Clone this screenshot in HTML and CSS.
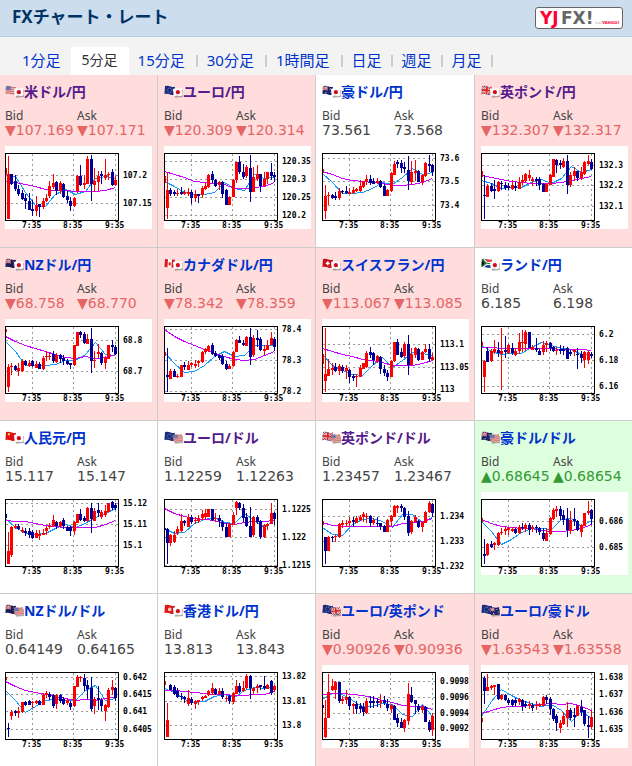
FILE: index.html
```html
<!DOCTYPE html>
<html lang="ja">
<head>
<meta charset="utf-8">
<title>FXチャート・レート</title>
<link rel="stylesheet" href="styles.css">
</head>
<body>
<header class="header">
  <h1 class="header-title">FXチャート・レート</h1>
  <a class="sponsor" href="#" aria-label="YJFX! from YAHOO!">
    <svg width="86" height="20" viewBox="0 0 86 20">
      <text class="logo-yj" x="4" y="16">YJ</text>
      <text class="logo-fx" x="25" y="16">FX!</text>
      <text class="logo-from" x="59" y="16">from</text>
      <text class="logo-yahoo" x="66" y="16">YAHOO!</text>
    </svg>
  </a>
</header>
<nav class="tabs">
  <a class="tab tab-first" href="#">1分足</a>
  <span class="tab-active" aria-current="page">5分足</span>
  <a class="tab" href="#">15分足</a><i class="sep"></i>
  <a class="tab" href="#">30分足</a><i class="sep"></i>
  <a class="tab" href="#">1時間足</a><i class="sep"></i>
  <a class="tab tab-long-term" href="#">日足</a><i class="sep"></i>
  <a class="tab tab-long-term" href="#">週足</a><i class="sep"></i>
  <a class="tab tab-long-term" href="#">月足</a><i class="sep"></i>
</nav>
<main class="rates" id="rates"></main>
<script src="rates.js"></script>
</body>
</html>
```
FILE: styles.css
```css
* {
  box-sizing: border-box;
}

body {
  margin: 0;
  background: #fff;
  color: #444;
  font-family: "Noto Sans", "Noto Sans CJK JP", sans-serif;
}

.header {
  display: flex;
  align-items: center;
  justify-content: space-between;
  height: 37px;
  padding: 0 9px 0 12px;
  background: #ccdded;
  border-bottom: 1px solid #b5c9dc;
}

.header-title {
  margin: 0;
  padding-bottom: 3px;
  color: #036;
  font-size: 17px;
  line-height: 24px;
}

.sponsor {
  display: block;
  height: 22px;
  background: #fff;
  border: 1px solid #666;
  border-radius: 3px;
}

.sponsor svg {
  display: block;
}

.sponsor text {
  font-family: "DejaVu Sans", sans-serif;
  font-weight: bold;
}

.logo-yj {
  fill: #f03;
  font-size: 17px;
}

.logo-fx {
  fill: #666;
  font-size: 17px;
}

.sponsor .logo-from {
  fill: #999;
  font-size: 3px;
  font-weight: normal;
}

.logo-yahoo {
  fill: #f03;
  font-size: 4px;
}

.tabs {
  display: flex;
  height: 38px;
  padding: 10px 0 0 12px;
  background: #f3f3f3;
  font-size: 15px;
  line-height: 26px;
  white-space: nowrap;
}

.tab {
  padding: 0 11px 0 9px;
  color: #03c;
  text-decoration: none;
}

.tab-first {
  padding: 0 10px;
}

.tab-long-term {
  padding: 0 9px;
}

.tab-active {
  padding: 0 11px;
  background: #fff;
  color: #333;
  font-size: 14px;
}

.sep {
  width: 2px;
  height: 12px;
  margin-top: 8px;
  background: #ccc;
}

.rates {
  display: grid;
  grid-template-columns: 157fr 158fr 159fr 158fr;
}

.rate {
  padding: 4px 0 18px 6px;
  border-left: 1px solid #ccc;
  border-bottom: 1px solid #ccc;
}

.rate:nth-child(4n + 1) {
  padding-left: 5px;
  border-left: 0;
}

.rate:nth-last-child(-n + 4) {
  border-bottom: 0;
}

.down {
  background: #fdd;
}

.up {
  background: #dfd;
}

.pair {
  display: flex;
  align-items: center;
  height: 26px;
  margin: 0 0 4px;
  font-size: 14px;
  line-height: 24px;
  white-space: nowrap;
}

.pair a {
  color: #03c;
  text-decoration: none;
}

.pair a.seen {
  color: #551a8b;
}

.flags {
  flex: none;
}

.quotes {
  display: grid;
  grid-template-columns: 72px 72px;
  align-content: start;
  height: 37px;
  margin: 0;
}

.quotes dt {
  font-size: 12px;
  line-height: 14px;
}

.quotes dd {
  margin: 0;
  font-family: "DejaVu Sans", sans-serif;
  font-size: 14px;
  line-height: 14px;
  white-space: nowrap;
}

.down dd {
  color: #e66464;
}

.up dd {
  color: #393;
}

.chart {
  display: block;
  background: #fff;
  shape-rendering: crispEdges;
}

.chart text {
  fill: #000;
  font-family: "DejaVu Sans Mono", monospace;
  font-size: 8px;
  font-weight: bold;
}

.grid {
  stroke: #999;
  stroke-dasharray: 2 3;
}

.frame {
  fill: none;
  stroke: #000;
}

.ma-short,
.ma-long {
  fill: none;
  stroke: #19f;
}

.ma-long {
  stroke: #c0f;
}

.r {
  fill: #f00;
}

.b {
  fill: #009;
}
```
FILE: rates.js
```js
// Chart heights are stored in thirds of a pixel, measured down from the sheet's top.
// Candle: colour, high, body top, body bottom, low. The averages have a point every 10px.
const pairs = [
  { name: "米ドル/円", flags: "us jp", seen: 1, state: "down", bid: "107.169", ask: "107.171",
    grid: { "107.2": 300, "107.15": 385 }, first: "r280 298",
    candles: "r243 298 432 432,b297 298 327 330,b300 318 342 347,b330 342 357 362,b345 354 372 375,b357 368 378 403,b355 378 404 405,b375 403 408 423,r363 391 408 423,b387 387 397 426,r368 378 397 402,r357 368 378 380,r318 333 362 368,r297 324 336 342,b318 321 348 360,r318 324 348 357,b324 327 365 370,b348 363 374 384,b365 378 393 407,r366 370 393 395,r300 302 348 355,b270 302 330 334,r300 324 330 342,r243 252 327 328,b240 252 327 378,r278 318 330 350,r288 303 322 348,b288 297 303 327,r252 300 308 315,r290 297 301 315,b282 291 330 333,r303 315 330 333",
    short: [297,303,350,390,392,358,343,358,348,308,303,310], long: [318,321,326,333,342,345,344,349,349,349,346,336] },
  { name: "ユーロ/円", flags: "eu jp", seen: 1, state: "down", bid: "120.309", ask: "120.314",
    grid: { "120.35": 257, "120.3": 313, "120.25": 367, "120.2": 421 }, first: "r303 325",
    candles: "r290 345 398 432,b338 346 358 362,b345 352 356 362,r342 353 357 362,b335 350 357 360,r345 351 357 360,r340 352 358 362,b345 352 370 387,r345 357 370 380,b357 357 362 383,r333 338 360 368,r325 333 342 345,r297 300 336 338,b287 298 315 325,b312 315 333 337,r318 321 330 345,b318 321 357 370,b342 345 390 390,r363 366 390 390,r312 315 366 367,r262 262 315 325,b243 262 290 298,b267 290 305 313,r270 276 303 308,b240 280 350 380,r275 306 350 350,r270 298 313 318,b297 297 333 352,r291 312 333 335,r291 291 313 328,b265 291 303 315,b291 300 306 320",
    short: [318,332,352,357,358,352,322,340,345,298,308,307], long: [288,298,307,317,322,325,328,338,338,335,334,321] },
  { name: "豪ドル/円", flags: "au jp", bid: "73.561", ask: "73.568",
    grid: { "73.6": 250, "73.5": 319, "73.4": 391 }, first: "r283 295",
    candles: "r330 363 407 432,r350 360 364 390,b357 360 370 372,b350 362 370 375,r340 348 370 375,b345 348 352 358,b332 348 354 357,r340 350 356 357,r335 345 353 357,r338 342 348 352,r315 333 347 350,r318 321 335 340,r300 312 322 330,b300 312 325 330,b308 318 326 328,r308 318 324 326,b315 318 335 340,b328 333 362 363,r342 345 362 363,r292 295 348 350,r258 266 299 300,b255 262 267 280,b256 264 280 293,b262 276 282 295,b243 285 318 345,r258 292 322 330,r256 287 293 318,b285 288 320 322,r297 300 322 330,r262 265 302 306,b240 266 273 290,b266 270 290 302",
    short: [293,322,355,355,350,338,322,328,305,278,296,290], long: [288,298,308,316,318,321,325,330,330,327,320,310] },
  { name: "英ポンド/円", flags: "gb jp", seen: 1, state: "down", bid: "132.307", ask: "132.317",
    grid: { "132.3": 271, "132.2": 331, "132.1": 394 }, first: "r288 306",
    candles: "b300 360 362 432,r327 333 366 366,b325 334 348 350,b315 342 349 372,r318 321 348 350,b318 324 328 345,b322 330 338 345,b325 332 338 345,r315 330 342 345,b320 332 338 348,r306 320 342 342,r300 315 320 330,r293 296 318 320,r285 300 308 318,r305 312 318 333,b306 312 318 332,b306 312 330 345,b325 328 350 350,r325 328 350 350,r297 300 330 330,r252 252 305 306,b252 256 270 293,b255 264 270 283,r250 258 275 280,b240 258 330 357,r290 300 330 335,r275 288 303 318,b288 288 310 318,r276 291 310 315,r258 262 297 300,r240 258 266 270,b253 262 282 285",
    short: [316,325,338,335,335,322,312,325,308,272,292,282], long: [300,305,312,318,321,323,324,324,320,315,308,303] },
  { name: "NZドル/円", flags: "nz jp", state: "down", bid: "68.758", ask: "68.770",
    grid: { "68.8": 276, "68.7": 370 }, first: "r243 252",
    candles: "r348 357 417 432,r345 353 358 380,b350 354 365 370,r345 360 368 383,r333 338 370 372,b336 339 350 353,r335 345 353 358,b337 340 353 358,r340 347 360 360,b342 347 362 363,r325 330 362 365,r308 324 328 338,r315 323 326 335,b310 318 340 345,r315 320 342 345,b318 320 333 345,b320 330 340 350,b332 340 347 350,b345 346 352 363,r291 292 352 355,r252 252 293 294,b250 252 262 270,b252 258 285 288,r258 272 287 288,b240 272 338 375,r310 336 340 360,r288 312 318 330,b312 316 345 350,r325 330 345 363,r290 292 333 334,b276 290 297 312,b291 297 318 320",
    short: [280,310,352,352,352,348,335,337,318,282,318,320], long: [264,278,290,300,310,318,327,329,325,329,327,318] },
  { name: "カナダドル/円", flags: "ca jp", state: "down", bid: "78.342", ask: "78.359",
    grid: { "78.4": 243, "78.3": 337, "78.2": 430 }, first: "r312 325",
    candles: "b300 382 388 432,r363 369 393 393,b363 369 388 388,r378 385 388 390,r350 351 388 388,b343 350 357 365,r338 350 366 366,r342 346 352 357,r335 347 353 360,r335 340 345 357,r308 312 342 345,r300 304 313 318,r290 295 308 312,b285 292 318 320,b308 315 325 328,b320 322 330 335,b318 325 347 350,b340 348 364 366,r348 354 363 363,r308 312 355 356,r273 276 312 312,b264 276 285 285,b276 285 292 294,r265 267 293 293,b240 267 328 350,r262 270 320 328,b247 270 275 297,b267 273 306 308,r290 303 308 322,r276 290 305 306,r253 270 290 290,b267 273 297 310",
    short: [312,345,373,368,350,325,310,325,322,290,292,290], long: [243,265,280,291,302,315,325,333,336,332,322,308] },
  { name: "スイスフラン/円", flags: "ch jp", state: "down", bid: "113.067", ask: "113.085",
    grid: { "113.1": 289, "113.05": 358, "113": 424 }, first: "r318 348",
    candles: "r240 378 398 432,r333 363 383 383,r345 360 365 382,b345 357 370 372,r348 355 370 380,b350 358 370 375,r350 360 368 392,b362 365 388 405,b378 383 390 400,r378 384 388 417,r352 360 387 387,r345 345 362 363,r310 315 357 360,b297 313 322 330,b312 315 335 350,r320 325 340 345,b324 328 362 378,b350 362 375 385,b365 374 388 398,r336 338 386 387,r281 282 340 342,b273 283 320 322,b300 313 327 330,r282 288 325 330,b262 288 350 380,r300 318 350 350,r297 300 320 330,b300 303 335 338,r308 312 337 337,r288 302 312 315,b287 302 333 342,r315 328 336 340",
    short: [318,350,365,378,380,350,327,358,335,312,315,320], long: [300,310,318,325,333,335,343,350,352,350,346,337] },
  { name: "ランド/円", flags: "za jp", bid: "6.185", ask: "6.198",
    grid: { "6.2": 259, "6.18": 337, "6.16": 415 }, first: "r283 295",
    candles: "r337 338 388 432,b298 310 342 342,r303 308 340 342,r276 303 312 318,b282 306 316 327,r240 308 318 425,b265 306 313 330,r288 290 315 318,b286 300 315 322,r300 310 320 325,r255 283 308 318,r247 282 286 312,r246 253 287 308,b252 252 300 300,r290 297 305 305,b270 300 307 312,b302 308 320 320,r280 292 312 320,r280 285 290 312,b282 284 300 308,b295 298 308 312,r297 305 310 320,b290 304 308 318,b295 303 308 322,b297 299 333 333,b305 312 318 325,r302 306 312 325,b300 318 322 363,b308 318 330 345,r309 312 335 360,r308 312 335 348,b312 318 324 330",
    short: [290,310,318,314,314,298,282,290,300,303,318,320], long: [297,298,299,300,300,301,301,301,303,304,304,307] },
  { name: "人民元/円", flags: "cn jp", bid: "15.117", ask: "15.147",
    grid: { "15.12": 247, "15.11": 310, "15.1": 373 }, first: "b279 290",
    candles: "r333 390 430 430,r315 317 401 407,r310 315 322 324,b309 315 323 327,r317 327 333 337,b322 329 337 345,b322 330 342 352,b327 333 352 355,r327 337 350 352,r327 340 344 357,r324 335 342 342,r315 321 330 342,r307 314 319 323,r282 297 315 319,b299 303 315 325,r300 303 315 322,b290 297 315 324,b315 317 329 330,b315 319 330 345,r300 303 330 342,r279 280 305 305,b264 279 297 299,b284 290 300 303,r259 261 299 303,b247 261 294 335,r262 269 299 300,b247 267 277 287,r267 272 287 294,r252 270 282 289,r247 247 272 272,b240 243 260 267,b247 252 260 267",
    short: [292,319,337,340,337,322,310,319,307,289,275,262], long: [297,299,301,306,312,314,317,319,319,317,310,297] },
  { name: "ユーロ/ドル", flags: "eu us", seen: 1, bid: "1.12259", ask: "1.12263",
    grid: { "1.1225": 265, "1.122": 349, "1.1215": 433 }, first: "b322 327",
    candles: "b322 325 365 429,r340 342 367 374,r329 342 362 367,r315 325 337 342,r279 301 329 332,b297 301 305 315,r279 287 317 317,b282 287 302 309,r287 296 300 309,r282 290 299 307,r267 280 292 297,r265 277 287 297,r264 265 287 289,b264 265 297 300,r277 290 295 303,b282 290 300 317,b297 303 317 330,b305 317 347 347,r305 309 347 347,r272 282 312 312,r240 242 260 282,b243 246 262 267,b249 260 290 303,b277 287 315 317,b259 315 347 349,r285 289 342 347,b282 289 302 309,b297 299 347 354,r309 312 349 352,r305 309 315 327,r247 277 309 310,b273 277 294 312",
    short: [322,337,332,305,295,289,302,307,275,297,319,294], long: [262,277,286,290,295,297,305,309,302,300,299,297] },
  { name: "英ポンド/ドル", flags: "gb us", seen: 1, bid: "1.23457", ask: "1.23467",
    grid: { "1.234": 286, "1.233": 361, "1.232": 435 }, first: "r300 312",
    candles: "b347 349 389 430,r345 347 389 390,b344 347 350 363,r342 345 349 363,r307 309 349 352,r297 305 312 322,r297 305 310 317,r287 299 305 317,b287 297 303 317,r285 292 305 305,r282 287 297 300,r272 279 289 302,r277 285 288 305,b282 285 305 317,r290 297 305 312,b287 305 309 317,b305 307 319 327,b313 315 332 332,r293 297 332 332,r282 285 300 315,r252 254 287 287,r253 255 260 277,b249 255 262 272,b257 260 287 297,b270 285 335 345,r297 300 333 339,r282 287 302 302,b297 300 317 322,r302 302 319 332,r270 272 305 305,r240 247 272 277,b245 249 275 287",
    short: [317,340,342,310,295,290,300,317,279,279,302,289], long: [303,312,316,316,316,316,316,314,305,302,299,292] },
  { name: "豪ドル/ドル", flags: "au us", state: "up", bid: "0.68645", ask: "0.68654",
    grid: { "0.686": 300, "0.685": 379 }, first: "r292 303",
    candles: "b354 399 405 430,r365 370 402 405,b359 369 377 382,r363 367 373 387,r333 335 372 375,r322 333 337 342,r315 325 330 342,r319 322 327 342,r317 325 330 332,b322 325 337 339,r312 319 335 339,b305 317 322 327,r307 313 325 332,b307 312 327 342,r312 317 325 332,b312 317 322 335,b319 322 332 342,b322 335 355 359,r322 335 359 360,r287 292 339 342,r262 267 294 297,r255 265 271 287,b255 265 285 297,b267 282 297 312,b262 294 327 347,r270 297 329 339,b262 295 300 315,b297 299 327 329,r309 312 332 347,r275 277 315 315,r240 269 277 282,b263 267 294 312",
    short: [299,330,369,355,332,320,322,325,295,290,315,297], long: [294,307,315,319,320,322,327,331,329,327,322,310] },
  { name: "NZドル/ドル", flags: "nz us", bid: "0.64149", ask: "0.64165",
    grid: { "0.642": 249, "0.6415": 301, "0.641": 352, "0.6405": 405 }, first: "r249 257",
    candles: "b387 402 405 430,r347 353 367 379,b347 351 357 367,r339 352 357 372,r324 325 354 357,b322 324 333 337,b317 322 332 334,r322 323 327 342,r317 322 327 329,b319 322 332 332,r297 302 332 332,r290 297 303 312,b295 299 309 317,b300 303 335 342,r300 302 329 345,b300 303 322 327,b309 315 329 332,r315 319 327 332,b322 327 340 347,r277 277 337 339,r243 249 280 280,r247 250 253 265,b240 252 275 292,b259 273 285 315,b249 282 344 350,r309 315 337 359,b277 312 319 347,b312 317 335 352,r330 333 352 380,r282 287 339 342,r259 279 287 302,b279 282 312 322",
    short: [287,319,355,335,319,315,317,317,287,274,317,312], long: [262,277,287,293,300,305,312,319,314,317,313,309] },
  { name: "香港ドル/円", flags: "hk jp", bid: "13.813", ask: "13.843",
    grid: { "13.82": 247, "13.81": 322, "13.8": 394 }, first: "r261 272",
    candles: "r327 379 430 430,b270 272 287 289,b272 279 300 303,b282 292 309 312,b297 305 310 317,b305 309 315 327,r287 312 330 335,b309 315 327 332,r317 322 329 344,r317 319 325 332,r307 310 315 322,r302 305 312 312,r287 292 302 307,r267 282 297 302,b282 285 300 303,r282 292 299 303,b282 290 309 315,r307 312 315 324,b303 305 322 330,r294 297 324 330,r259 277 300 300,b267 275 294 297,r262 282 292 294,r240 247 282 285,b242 247 282 315,r279 282 290 303,r270 277 282 297,b272 273 280 287,b247 275 282 287,r270 272 284 284,b259 262 297 302,r272 277 287 294",
    short: [282,295,314,324,322,305,299,309,289,280,282,279], long: [287,287,291,294,297,299,301,303,303,301,299,290] },
  { name: "ユーロ/英ポンド", flags: "eu gb", state: "down", bid: "0.90926", ask: "0.90936",
    grid: { "0.9098": 262, "0.9096": 310, "0.9094": 358, "0.9092": 403 }, first: "b332 342",
    candles: "r317 372 429 432,r240 294 372 372,r255 277 289 292,r261 263 287 315,b263 265 322 327,r307 315 322 330,r287 309 319 330,b305 309 335 347,r327 330 335 360,b322 330 345 359,b327 337 345 357,b327 340 354 367,r312 322 357 359,b307 322 327 342,b307 322 327 342,b312 322 327 340,r300 322 326 342,b307 319 327 332,b315 330 342 352,r330 332 345 357,b332 335 377 377,b359 372 387 399,b372 385 402 402,r375 379 402 415,r267 300 380 392,b280 302 325 327,b317 319 330 360,b330 335 347 354,r332 339 347 357,b335 339 384 384,b379 385 407 415,r357 367 409 427",
    short: [315,297,299,319,335,337,327,330,359,365,330,367], long: [299,296,296,299,304,308,317,325,334,335,335,346] },
  { name: "ユーロ/豪ドル", flags: "eu au", state: "down", bid: "1.63543", ask: "1.63558",
    grid: { "1.638": 250, "1.637": 301, "1.636": 355, "1.635": 406 }, first: "r372 385",
    candles: "b247 252 290 330,r240 279 290 290,r272 277 282 287,r272 274 279 302,b270 270 315 317,r300 303 315 317,b300 304 319 322,b312 319 327 332,b315 319 332 339,b312 319 327 335,r312 315 325 332,b315 319 335 350,b322 330 337 342,r322 330 337 344,b327 332 342 352,r322 332 337 347,r327 330 335 339,r305 309 335 337,b303 309 319 330,b309 315 345 362,b342 345 375 382,b359 367 387 410,r377 387 402 417,r354 365 389 392,r324 347 372 400,b342 347 372 379,b342 362 370 399,r334 335 367 367,b317 340 355 367,b347 347 390 397,b367 394 399 432,r347 370 399 405",
    short: [365,322,285,302,319,327,335,329,347,382,352,372], long: [357,347,339,337,335,334,331,327,330,327,337,349] }
];

const jack = '<path d="M0 0L10 8M10 0L0 8" stroke="#fff" stroke-width="2"/><path d="M0 0L10 8M10 0L0 8" stroke="#d22"/><path d="M5 0V8M0 4H10" stroke="#fff" stroke-width="3"/><path d="M5 0V8M0 4H10" stroke="#d22" stroke-width="2"/>';
const smallJack = '<path d="M0 0L5 4M5 0L0 4M2.5 0V4M0 2H5" stroke="#e99" stroke-width="1"/>';
const field = color => `<path d="M0 0Q3 -1 5 0T10 0V8Q7 9 5 8T0 8Z" fill="${color}"/>`;
const flagArt = {
  us: field("#f0b0ac") + '<path d="M0 1H10M0 3H10M0 5H10M0 7H10" stroke="#cc7470"/><rect width="5" height="4" fill="#6878a8"/>',
  jp: field("#fff") + '<circle cx="5" cy="4" r="2.4" fill="#d01020"/>',
  eu: field("#1c2c80") + '<circle cx="5" cy="4" r="2.3" fill="none" stroke="#707c98" stroke-dasharray="1 1"/>',
  gb: field("#26408c") + jack,
  au: field("#1c2068") + smallJack + '<path d="M7 2h1v1h-1zM8 5h1v1h-1zM3 6h1v1h-1z" fill="#fff"/>',
  nz: field("#1a1c58") + smallJack + '<path d="M7 2h1v1h-1zM8 5h1v1h-1z" fill="#e66"/>',
  ca: field("#fff") + '<path d="M0 0h3v8H0zM7 0h3v8H7zM4 3h2v3H4z" fill="#d81820"/>',
  ch: field("#c81018") + '<path d="M5 2V6M3 4H7" stroke="#fff" stroke-width="1.5"/>',
  za: field("#258040") + '<path d="M3 0h7v3H5z" fill="#d44"/><path d="M3 8h7V5H5z" fill="#249"/><path d="M0 1l3 3-3 3z" fill="#111"/><path d="M2 0l3 3h5M2 8l3-3h5" fill="none" stroke="#fff"/>',
  cn: field("#dc1010") + '<path d="M2 1h2v2H2z" fill="#fd4"/>',
  hk: field("#dc1818") + '<circle cx="5" cy="4" r="1.8" fill="#f8c8c8"/>'
};

const flagsSvg = codes => {
  const [back, front] = codes.split(" ");
  return `<svg class="flags" width="19" height="14" viewBox="0 0 19 14" aria-hidden="true">
    <g transform="translate(1 1) rotate(4)">${flagArt[back]}</g>
    <g transform="translate(9 4) rotate(-6)"><path d="M1 2H10V9H1Z" fill="#777" opacity=".6"/><g transform="scale(.9)">${flagArt[front]}</g></g>
  </svg>`;
};

const SHEET_TOP = 213;
const toY = v => Math.round((v - SHEET_TOP) / 3);
const box = (cls, x, top, w, bottom) =>
  `<rect class="${cls}" x="${x}" y="${toY(top)}" width="${w}" height="${Math.max(1, toY(bottom) - toY(top))}"/>`;
const average = (cls, points) =>
  `<polyline class="${cls}" points="${points.map((v, i) => `${i * 10 + 0.5},${toY(v) + 0.5}`).join(" ")}"/>`;

function chartSvg(p) {
  const rows = Object.entries(p.grid).sort((a, b) => a[1] - b[1]);
  const grid = [27, 68, 110].map(x => `<path class="grid" d="M${x + 0.5} 8V74"/>`).join("") +
    rows.map(([, v]) => `<path class="grid" d="M1 ${toY(v) + 0.5}H113"/>`).join("");
  const labels = rows.map(([t, v]) => `<text x="118" y="${toY(v) + 3}">${t}</text>`).join("") +
    '<text x="17" y="82">7:35</text><text x="58" y="82">8:35</text><text x="100" y="82">9:35</text>';
  const [start, end] = p.first.slice(1).split(" ");
  const candles = box(p.first[0], 0, start, 2, end) + p.candles.split(",").map((c, i) => {
    const [high, top, bottom, low] = c.slice(1).split(" ").map(Number);
    const x = 3 + Math.round(i * 107 / 31);
    return box(c[0], x, high, 1, low) + box(c[0], x - 1, top, 3, bottom);
  }).join("");
  return `<svg class="chart" width="147" height="83" viewBox="0 0 147 83" role="img" aria-label="${p.name}">
    ${grid}${average("ma-short", p.short)}${average("ma-long", p.long)}${candles}
    <rect class="frame" x="0.5" y="7.5" width="113" height="67"/>${labels}</svg>`;
}

const marks = { down: "▼", up: "▲" };
document.getElementById("rates").innerHTML = pairs.map(p => {
  const mark = marks[p.state] || "";
  return `<section class="rate ${p.state || ""}">
    <h2 class="pair">${flagsSvg(p.flags)}<a class="${p.seen ? "seen" : ""}" href="#">${p.name}</a></h2>
    <dl class="quotes"><dt>Bid</dt><dt>Ask</dt><dd>${mark}${p.bid}</dd><dd>${mark}${p.ask}</dd></dl>
    ${chartSvg(p)}
  </section>`;
}).join("");
```
